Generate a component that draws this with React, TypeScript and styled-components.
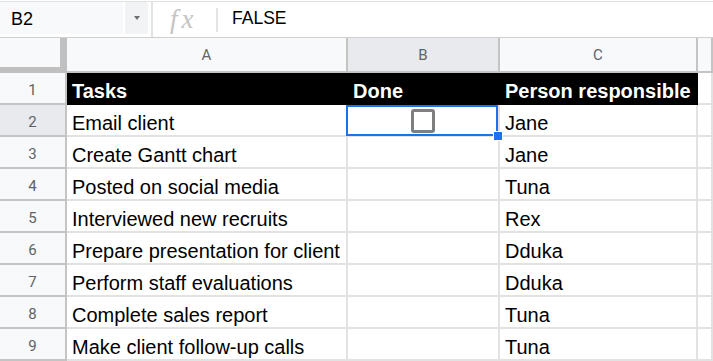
import styled, { createGlobalStyle } from "styled-components";

const GlobalStyle = createGlobalStyle`
  html, body {
    margin: 0;
    padding: 0;
    background: #fff;
    overflow: hidden;
  }
  * {
    box-sizing: border-box;
  }
`;

const Page = styled.div`
  width: 713px;
  height: 361px;
  overflow: hidden;
  font-family: "Liberation Sans", Arial, sans-serif;
`;

const FormulaBar = styled.div`
  margin-top: 1px;
  height: 37px;
  display: flex;
  align-items: center;
  border-top: 1px solid #e0e0e0;
  border-bottom: 1px solid #cfcfcf;
`;

const NameBox = styled.div`
  width: 123px;
  height: 32px;
  margin-bottom: 3px;
  padding: 3px 0 0 11px;
  background: #f8f9fa;
  font-size: 18px;
  line-height: 29px;
  color: #000;
`;

const NameArrow = styled.div`
  width: 23px;
  height: 32px;
  margin: 0 3px 3px 2px;
  background: #f1f3f4;
  border-radius: 0 3px 3px 0;
  display: flex;
  align-items: center;
  justify-content: center;

  &::after {
    content: "";
    border-left: 3.5px solid transparent;
    border-right: 3.5px solid transparent;
    border-top: 4px solid #6f6f6f;
  }
`;

const Divider = styled.div<{ $h: number }>`
  width: 2px;
  height: ${({ $h }) => $h}px;
  background: #e3e3e3;
`;

const FxLabel = styled.div`
  width: 63px;
  padding-left: 17px;
  font-family: "Liberation Serif", "Times New Roman", serif;
  font-style: italic;
  font-size: 27px;
  letter-spacing: 4px;
  color: #c4c4c4;
  line-height: 30px;
  margin-bottom: 2px;
`;

const FormulaText = styled.div`
  padding-left: 14px;
  font-size: 17.5px;
  color: #000;
  margin-bottom: 2px;
`;

const Sheet = styled.div`
  display: grid;
  grid-template-columns: 67px 281px 152px 198px 1fr;
  grid-template-rows: 35px repeat(9, 32px);
`;

const Corner = styled.div`
  background: #f8f9fa;
  border-right: 7px solid #c0c0c0;
  border-bottom: 6px solid #c0c0c0;
`;

const ColHead = styled.div<{ $active?: boolean }>`
  background: ${({ $active }) => ($active ? "#e8eaed" : "#f8f9fa")};
  border-right: 2px solid #c4c4c4;
  border-bottom: 2px solid #c4c4c4;
  display: flex;
  align-items: center;
  justify-content: center;
  font-family: Roboto, "Liberation Sans", Arial, sans-serif;
  font-size: 15px;
  color: #5f6368;
  padding-top: 1px;
`;

const RowHead = styled.div<{ $active?: boolean }>`
  background: ${({ $active }) => ($active ? "#e8eaed" : "#f8f9fa")};
  border-right: 2px solid #c4c4c4;
  border-bottom: 2px solid #c4c4c4;
  display: flex;
  align-items: center;
  justify-content: center;
  font-family: Roboto, "Liberation Sans", Arial, sans-serif;
  font-size: 15px;
  color: #5f6368;
  padding-top: 3px;
`;

const Cell = styled.div<{ $head?: boolean; $center?: boolean }>`
  position: relative;
  display: flex;
  align-items: ${({ $center }) => ($center ? "center" : "flex-end")};
  justify-content: ${({ $center }) => ($center ? "center" : "flex-start")};
  padding: 0 5px 0;
  background: ${({ $head }) => ($head ? "#000" : "#fff")};
  color: ${({ $head }) => ($head ? "#fff" : "#000")};
  font-weight: ${({ $head }) => ($head ? 700 : 400)};
  font-size: 20px;
  line-height: 23px;
  white-space: nowrap;
  border-right: 2px solid ${({ $head }) => ($head ? "#000" : "#e2e2e3")};
  border-bottom: 2px solid ${({ $head }) => ($head ? "#000" : "#e2e2e3")};
`;

const Checkbox = styled.div`
  width: 24px;
  height: 24px;
  margin-top: 2px;
  border: 3px solid #7f7f7f;
  border-radius: 3px;
  background: #fff;
`;

const Selection = styled.div`
  position: absolute;
  left: -2px;
  top: 0;
  width: 152px;
  height: 31px;
  border: 2px solid #1a73e8;
  z-index: 2;
`;

const FillHandle = styled.div`
  position: absolute;
  left: 145px;
  top: 26px;
  width: 10px;
  height: 10px;
  background: #1a73e8;
  border: 1px solid #fff;
  z-index: 3;
`;

const columns = ["A", "B", "C", ""];

const tasks: [string, string][] = [
  ["Email client", "Jane"],
  ["Create Gantt chart", "Jane"],
  ["Posted on social media", "Tuna"],
  ["Interviewed new recruits", "Rex"],
  ["Prepare presentation for client", "Dduka"],
  ["Perform staff evaluations", "Dduka"],
  ["Complete sales report", "Tuna"],
  ["Make client follow-up calls", "Tuna"],
];

export default function App() {
  return (
    <>
      <GlobalStyle />
      <Page>
        <FormulaBar>
          <NameBox>B2</NameBox>
          <NameArrow />
          <Divider $h={35} />
          <FxLabel>fx</FxLabel>
          <Divider $h={24} />
          <FormulaText>FALSE</FormulaText>
        </FormulaBar>
        <Sheet>
          <Corner />
          {columns.map((c, i) => (
            <ColHead key={i} $active={c === "B"}>
              {c}
            </ColHead>
          ))}

          <RowHead>1</RowHead>
          <Cell $head>Tasks</Cell>
          <Cell $head>Done</Cell>
          <Cell $head>Person responsible</Cell>
          <Cell />

          {tasks.map(([task, person], i) => {
            const row = i + 2;
            const selected = row === 2;
            return [
              <RowHead key={`h${row}`} $active={selected}>
                {row}
              </RowHead>,
              <Cell key={`a${row}`}>{task}</Cell>,
              <Cell key={`b${row}`} $center>
                {selected && (
                  <>
                    <Checkbox />
                    <Selection />
                    <FillHandle />
                  </>
                )}
              </Cell>,
              <Cell key={`c${row}`}>{person}</Cell>,
              <Cell key={`d${row}`} />,
            ];
          })}
        </Sheet>
      </Page>
    </>
  );
}
